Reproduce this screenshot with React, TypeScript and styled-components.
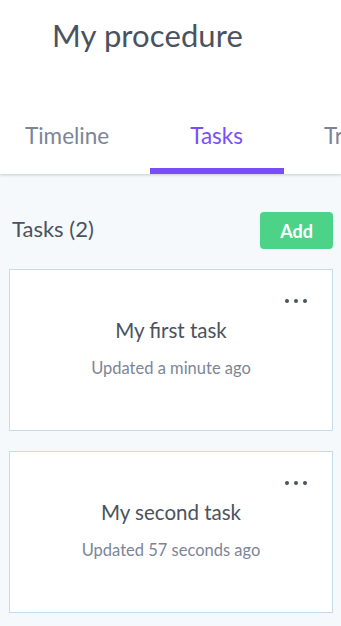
import React from "react";
import styled, { createGlobalStyle } from "styled-components";

const Global = createGlobalStyle`
  html, body { margin: 0; padding: 0; }
  body {
    background: #f6f9fc;
    font-family: Lato, "Open Sans", sans-serif;
    width: 341px;
    overflow: hidden;
  }
`;

const Page = styled.div`
  display: flex;
  flex-direction: column;
  min-height: 626px;
`;

const Header = styled.header`
  background: #ffffff;
  display: flex;
  flex-direction: column;
  box-shadow: 0 1px 3px rgba(60, 70, 90, 0.25);
  position: relative;
  z-index: 1;
`;

const Title = styled.h1`
  margin: 0;
  padding: 16px 0 0 52px;
  height: 102px;
  box-sizing: border-box;
  font-size: 31px;
  font-weight: 400;
  color: #4a525e;
  letter-spacing: 0.1px;
`;

const TabBar = styled.nav`
  display: flex;
  margin-left: -15px;
  overflow: hidden;
  white-space: nowrap;
`;

const Tab = styled.div<{ $active?: boolean }>`
  flex: none;
  padding: 0 41px 0 40px;
  height: 72px;
  box-sizing: border-box;
  display: flex;
  align-items: flex-start;
  padding-top: 20px;
  font-size: 22.5px;
  color: ${(p) => (p.$active ? "#7a4dfb" : "#7b8597")};
  border-bottom: 6px solid ${(p) => (p.$active ? "#7a4dfb" : "transparent")};
`;

const Content = styled.main`
  display: flex;
  flex-direction: column;
  padding: 37px 8px 0 9px;
  gap: 20px;
`;

const Toolbar = styled.div`
  display: flex;
  align-items: center;
  justify-content: space-between;
  padding-left: 3px;
`;

const SectionTitle = styled.h2`
  margin: 0 0 4px;
  font-size: 22px;
  font-weight: 400;
  color: #4a525e;
`;

const AddButton = styled.button`
  width: 73px;
  height: 37px;
  margin-top: 1px;
  border: none;
  border-radius: 4px;
  background: #4cd387;
  color: #ffffff;
  font-family: inherit;
  font-size: 18px;
  font-weight: 700;
  cursor: pointer;
`;

const Card = styled.div`
  position: relative;
  height: 162px;
  box-sizing: border-box;
  background: #ffffff;
  border: 1px solid #c4dcf0;
  display: flex;
  flex-direction: column;
  align-items: center;
  padding-top: 48px;
`;

const Dots = styled.div`
  position: absolute;
  top: 29px;
  right: 25px;
  display: flex;
  gap: 5px;
`;

const Dot = styled.span`
  width: 4px;
  height: 4px;
  border-radius: 50%;
  background: #4a525e;
`;

const CardTitle = styled.div`
  font-size: 20.5px;
  color: #4a525e;
`;

const CardMeta = styled.div`
  margin-top: 16px;
  font-size: 16.5px;
  color: #7b8597;
`;

const tasks = [
  { title: "My first task", updated: "Updated a minute ago" },
  { title: "My second task", updated: "Updated 57 seconds ago" },
];

export default function App() {
  return (
    <>
      <Global />
      <Page>
        <Header>
          <Title>My procedure</Title>
          <TabBar>
            <Tab>Timeline</Tab>
            <Tab $active>Tasks</Tab>
            <Tab>Trash</Tab>
          </TabBar>
        </Header>
        <Content>
          <Toolbar>
            <SectionTitle>Tasks (2)</SectionTitle>
            <AddButton>Add</AddButton>
          </Toolbar>
          {tasks.map((t) => (
            <Card key={t.title}>
              <Dots>
                <Dot />
                <Dot />
                <Dot />
              </Dots>
              <CardTitle>{t.title}</CardTitle>
              <CardMeta>{t.updated}</CardMeta>
            </Card>
          ))}
        </Content>
      </Page>
    </>
  );
}
